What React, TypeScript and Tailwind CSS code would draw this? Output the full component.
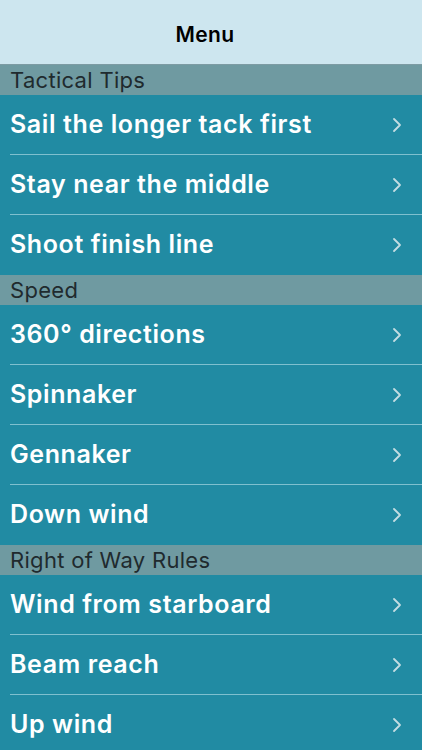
const sections = [
  { title: 'Tactical Tips', items: ['Sail the longer tack first', 'Stay near the middle', 'Shoot finish line'] },
  { title: 'Speed', items: ['360° directions', 'Spinnaker', 'Gennaker', 'Down wind'] },
  { title: 'Right of Way Rules', items: ['Wind from starboard', 'Beam reach', 'Up wind'] },
];

const Chevron = () => (
  <svg width="10" height="16" viewBox="0 0 10 16" fill="none">
    <path d="M2 2l6 6-6 6" stroke="#c3dde2" strokeWidth="1.8" strokeLinecap="round" strokeLinejoin="round" />
  </svg>
);

export default function App() {
  return (
    <div className="w-[422px] h-[750px] overflow-hidden bg-[#218ba3] font-['Inter','Liberation_Sans',sans-serif]">
      <header className="h-[65px] bg-[#cde6ef] border-b border-[#7d9ba3] flex items-center justify-center pt-[6px] pr-[12px]">
        <h1 className="text-[21px] font-semibold text-black tracking-[0.4px]">Menu</h1>
      </header>
      {sections.map((section) => (
        <div key={section.title}>
          <div className="h-[30px] bg-[#6f9aa1] px-[10px] flex items-center text-[22px] text-[#1f2a2e] leading-none tracking-[0.3px]">
            {section.title}
          </div>
          <ul>
            {section.items.map((item, i) => (
              <li key={item} className="h-[60px] pl-[10px] relative">
                <div className="h-full flex items-center justify-between pr-[20px]">
                  <span className="text-[25px] font-semibold text-white tracking-[0.6px]">{item}</span>
                  <Chevron />
                </div>
                {i < section.items.length - 1 && (
                  <div className="absolute bottom-0 left-[10px] right-0 h-px bg-[#7fc0cf]" />
                )}
              </li>
            ))}
          </ul>
        </div>
      ))}
    </div>
  );
}
